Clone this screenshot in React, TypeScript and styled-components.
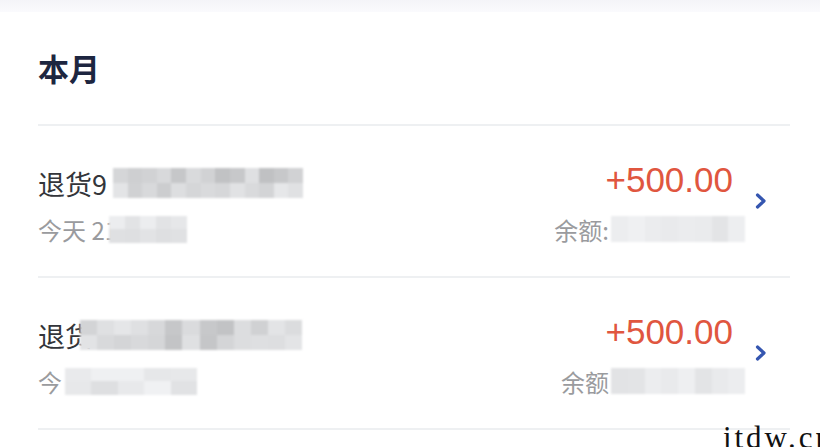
import styled, { createGlobalStyle } from 'styled-components';

const GlobalStyle = createGlobalStyle`
  html, body {
    margin: 0;
    padding: 0;
    background: #ffffff;
  }

  body {
    width: 820px;
    height: 447px;
    overflow: hidden;
    font-family: "Liberation Sans", "Noto Sans CJK SC", sans-serif;
  }
`;

const Page = styled.div`
  position: relative;
  width: 820px;
  height: 447px;
  overflow: hidden;
  background: #ffffff;
`;

const TopStrip = styled.div`
  height: 12px;
  background: linear-gradient(#f4f4f8, #fafafd);
`;

const Card = styled.div`
  padding: 0 30px 0 38px;
`;

const Title = styled.div`
  height: 110px;
  padding-bottom: 2px;
  display: flex;
  align-items: center;
  font-family: "Noto Sans CJK SC", sans-serif;
  font-size: 31px;
  font-weight: 700;
  color: #1d2640;
`;

const Divider = styled.div`
  height: 2px;
  background: #eef0f2;
`;

const Row = styled.div`
  height: 150px;
  display: grid;
  grid-template-columns: 1fr auto 45px;
  align-items: start;
  box-sizing: border-box;
`;

const Left = styled.div`
  display: flex;
  flex-direction: column;
  padding-top: 39px;
`;

const Right = styled.div`
  display: flex;
  flex-direction: column;
  align-items: flex-end;
  padding-top: 34px;
`;

const Name = styled.div`
  display: flex;
  align-items: center;
  height: 36px;
  font-family: "Noto Sans CJK SC", sans-serif;
  font-size: 27px;
  color: #33353a;
`;

const Sub = styled.div`
  display: flex;
  align-items: center;
  height: 34px;
  margin-top: 11px;
  font-family: "Noto Sans CJK SC", sans-serif;
  font-size: 24px;
  color: #9a9b9e;
`;

const Amount = styled.div`
  height: 40px;
  line-height: 40px;
  font-family: "Liberation Sans", Arial, sans-serif;
  font-size: 35px;
  color: #e0563f;
  padding-right: 12px;
`;

const Balance = styled(Sub)`
  margin-top: 12px;
`;

const Chevron = styled.div`
  display: flex;
  justify-content: flex-start;
  padding-top: 66px;
  padding-left: 9px;
`;

const Mosaic = styled.div<{ $cols: number; $w: number; $h: number; $ml: number }>`
  display: grid;
  grid-template-columns: repeat(${(p) => p.$cols}, 1fr);
  width: ${(p) => p.$w}px;
  height: ${(p) => p.$h}px;
  margin-left: ${(p) => p.$ml}px;
  filter: blur(0.8px);
  position: relative;
`;

const Cell = styled.div<{ $c: string }>`
  background: ${(p) => p.$c};
`;

const Watermark = styled.div`
  position: absolute;
  right: -14px;
  bottom: -9px;
  font-family: "Liberation Serif", "DejaVu Serif", serif;
  font-size: 31px;
  letter-spacing: 3px;
  color: #111111;
`;

const shade = (seed: number, min: number, max: number) => {
  const v = Math.abs(Math.sin(seed * 12.9898) * 43758.5453) % 1;
  const g = Math.round(min + v * (max - min));
  return `rgb(${g}, ${g + 1}, ${g + 3})`;
};

type MosaicBoxProps = {
  cols: number;
  rows: number;
  width: number;
  height: number;
  ml?: number;
  seed: number;
  min: number;
  max: number;
};

function MosaicBox({
  cols, rows, width, height, ml = 0, seed, min, max,
}: MosaicBoxProps) {
  const cells = Array.from({ length: cols * rows }, (_, i) => shade(seed + i, min, max));

  return (
    <Mosaic $cols={cols} $w={width} $h={height} $ml={ml}>
      {cells.map((c, i) => (
        // eslint-disable-next-line react/no-array-index-key
        <Cell key={i} $c={c} />
      ))}
    </Mosaic>
  );
}

function ChevronIcon() {
  return (
    <svg width="14" height="18" viewBox="0 0 14 18">
      <path d="M3.5 3 L10 9 L3.5 15" fill="none" stroke="#3556b0" strokeWidth="3.2" strokeLinecap="round" strokeLinejoin="round" />
    </svg>
  );
}

type Record = {
  id: number;
  name: string;
  nameMosaic: { width: number; ml: number };
  time: string;
  timeMosaic: { width: number; ml: number };
  amount: string;
  balanceLabel: string;
  seed: number;
};

const records: Record[] = [
  {
    id: 1,
    name: '退货9',
    nameMosaic: { width: 190, ml: 6 },
    time: '今天 21',
    timeMosaic: { width: 78, ml: -9 },
    amount: '+500.00',
    balanceLabel: '余额:',
    seed: 3,
  },
  {
    id: 2,
    name: '退货',
    nameMosaic: { width: 222, ml: -12 },
    time: '今',
    timeMosaic: { width: 132, ml: 3 },
    amount: '+500.00',
    balanceLabel: '余额',
    seed: 71,
  },
];

export default function App() {
  return (
    <Page>
      <GlobalStyle />
      <TopStrip />
      <Card>
        <Title>本月</Title>
        <Divider />
        {records.map((record) => (
          <div key={record.id}>
            <Row>
              <Left>
                <Name>
                  {record.name}
                  <MosaicBox
                    cols={13}
                    rows={2}
                    width={record.nameMosaic.width}
                    height={30}
                    ml={record.nameMosaic.ml}
                    seed={record.seed}
                    min={192}
                    max={230}
                  />
                </Name>
                <Sub>
                  {record.time}
                  <MosaicBox
                    cols={5}
                    rows={2}
                    width={record.timeMosaic.width}
                    height={27}
                    ml={record.timeMosaic.ml}
                    seed={record.seed + 40}
                    min={220}
                    max={240}
                  />
                </Sub>
              </Left>
              <Right>
                <Amount>{record.amount}</Amount>
                <Balance>
                  {record.balanceLabel}
                  <MosaicBox
                    cols={8}
                    rows={1}
                    width={134}
                    height={26}
                    ml={2}
                    seed={record.seed + 80}
                    min={226}
                    max={240}
                  />
                </Balance>
              </Right>
              <Chevron>
                <ChevronIcon />
              </Chevron>
            </Row>
            <Divider />
          </div>
        ))}
      </Card>
      <Watermark>itdw.cn</Watermark>
    </Page>
  );
}
